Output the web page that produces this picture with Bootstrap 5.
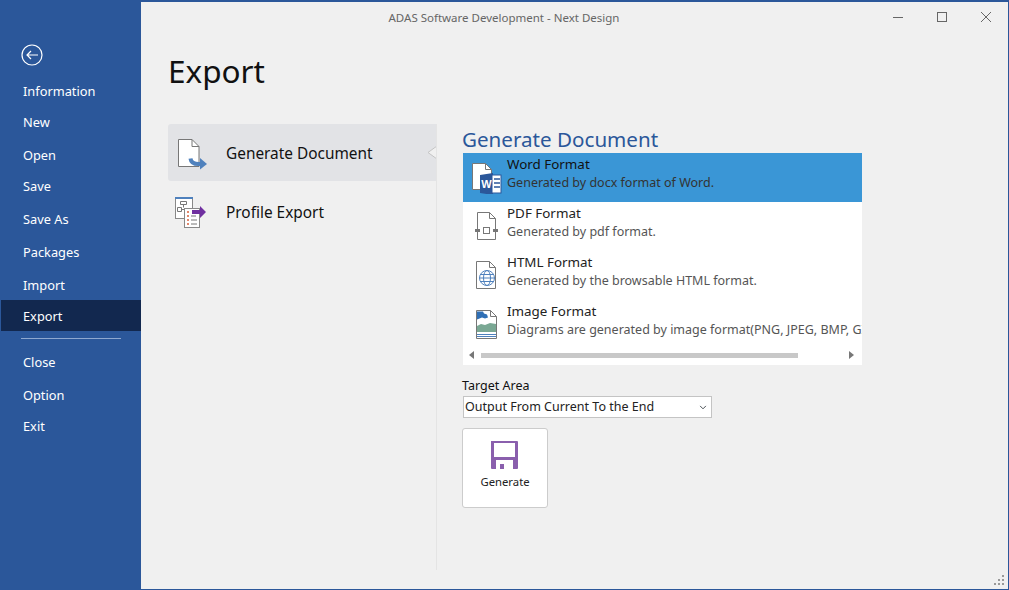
<!DOCTYPE html>
<html lang="en">
<head>
<meta charset="utf-8">
<title>Next Design</title>
<link href="https://cdn.jsdelivr.net/npm/bootstrap@5.3.0/dist/css/bootstrap.min.css" rel="stylesheet">
<style>
html,body{height:100%;overflow:hidden}
body{background:#f0f0f0;font-family:"Noto Sans","Open Sans",sans-serif;color:#111}
.win{height:590px;border:1px solid #2b579a;border-top-width:2px;border-left-width:1px}
.side{width:140px;background:#2b579a;color:#fff;padding-top:42px;flex:none}
.back-ic{display:block;margin:0 0 10px 20px;height:22px}
.side-item{height:31px;line-height:31px;padding-left:22px;font-size:12.8px;color:#fff}
.side-item.push{margin-top:2px}
.side-item.on{background:#12284f;margin:-1px 0 1px;line-height:33px}
.side-rule{height:1px;background:#8ea8cf;margin:6px 20px 8px 20px}
.cap{height:32px}
.cap-title{font-size:11.5px;color:#666;line-height:32px;margin-right:9px}
.cap-btn{width:44px;height:30px}
.page-title{font-size:31.500px;line-height:44px;margin:15px 0 31px 27px;font-weight:400;color:#111}
.left-pane{width:269px;margin-left:27px;height:446px;border-right:1px solid #e4e4e4}
.cat{height:57px;font-size:15.400px;padding:2px 0 0 9px}
.cat.on{background:#e2e3e6;border-radius:3px 0 0 3px}
.cat-ic{width:49px;flex:none}
.ic-out{margin-left:-2px;display:block}
.cat-caret{position:absolute;right:0;top:22px}
.cat.second{margin-top:2px}
.right-pane{padding-left:25px;width:425px}
.sec-title{font-size:20.6px;line-height:30px;color:#2b579a;margin:0 0 -1px;font-weight:400}
.fmt-box{margin-left:1px;width:399px;height:212px;background:#fff;border:0;border-radius:0}
.fmt{height:49px;font-size:12.5px;line-height:18px;white-space:nowrap;border:0;background:transparent;color:#222}
.fmt.list-group-item{padding:2px 0 0 44px}
.fmt.sel{background:#3a96d6;color:#111}
.fmt-name{font-size:13.400px;display:block;margin-bottom:1px}
.fmt-sub{color:#555;display:block;overflow:hidden}
.fmt.sel .fmt-sub{color:#333}
.fmt-ic{position:absolute;left:9px;top:9px}
.scroller{height:16px;margin-top:-2px;padding:0 8px 0 6px;gap:7px}
.scroll-thumb{width:317px;height:5px;background:#c8c8c8}
.scroll-fill{flex:1}
.target-lbl{font-size:12.5px;line-height:18px;margin:12px 0 1px}
.target-sel{width:249px;height:22px;margin-left:1px;padding:0 0 0 1px;font-size:12.5px;line-height:20px;border:1px solid #c4c4c4;border-radius:0;background-size:8px 7px;background-position:right 4px center;color:#222;font-family:inherit}
.gen-btn{width:86px;height:80px;margin-top:10px;background:#fff;border:1px solid #ccc;border-radius:3px;padding:12px 0 0;font-size:11.3px;line-height:16px;color:#222}
.gen-btn svg{display:block;margin:0 0 5px -1px}
.grip{position:absolute;right:4px;bottom:4px}
</style>
</head>
<body>
<div class="win d-flex position-relative">
  <nav class="side d-flex flex-column">
    <svg class="back-ic" width="22" height="22" viewBox="0 0 22 22" fill="none" stroke="#fff"><circle cx="11" cy="11" r="10" stroke-width="1.2"/><path d="M17 11H6M10 7l-4 4 4 4" stroke-width="1.2"/></svg>
    <div class="side-item">Information</div>
    <div class="side-item">New</div>
    <div class="side-item push">Open</div>
    <div class="side-item">Save</div>
    <div class="side-item push">Save As</div>
    <div class="side-item push">Packages</div>
    <div class="side-item push">Import</div>
    <div class="side-item on">Export</div>
    <div class="side-rule"></div>
    <div class="side-item">Close</div>
    <div class="side-item push">Option</div>
    <div class="side-item">Exit</div>
  </nav>
  <main class="flex-grow-1 d-flex flex-column">
    <div class="cap d-flex">
      <div class="cap-title flex-grow-1 text-center">ADAS Software Development - Next Design</div>
      <div class="d-flex">
        <div class="cap-btn d-flex align-items-center justify-content-center"><svg width="12" height="12" viewBox="0 0 12 12"><path d="M1 6.500h10" stroke="#666"/></svg></div>
        <div class="cap-btn d-flex align-items-center justify-content-center"><svg width="12" height="12" viewBox="0 0 12 12" fill="none"><rect x="1.500" y="1.500" width="9" height="9" stroke="#666"/></svg></div>
        <div class="cap-btn d-flex align-items-center justify-content-center"><svg width="12" height="12" viewBox="0 0 12 12"><path d="M1 1l10 10M11 1L1 11" stroke="#666"/></svg></div>
      </div>
    </div>
    <h1 class="page-title">Export</h1>
    <div class="d-flex">
      <div class="left-pane">
        <div class="cat on d-flex align-items-center position-relative">
          <span class="cat-ic">
            <svg width="32" height="32" viewBox="0 0 32 32" fill="none"><path d="M1.500 1.500H15l7 7v20H1.500z" fill="#fff" stroke="#777"/><path d="M15 1.500v7h7" stroke="#777"/><path d="M13.500 20.500c.5 4.500 4 6 10 5.500" stroke="#4f81bd" stroke-width="4"/><path d="M23 20l7 6-7 5.500z" fill="#4f81bd"/></svg>
          </span>
          <span>Generate Document</span>
          <svg class="cat-caret" width="9" height="13" viewBox="0 0 9 13" fill="none"><path d="M9 .7L1 6.500l8 5.800" fill="#f0f0f0" stroke="#c4c4c4"/></svg>
        </div>
        <div class="cat second d-flex align-items-center">
          <span class="cat-ic">
            <svg class="ic-out" width="32" height="32" viewBox="0 0 32 32" fill="none"><rect x=".5" y=".5" width="17" height="21" fill="#fff" stroke="#888"/><path d="M0 1h18" stroke="#4f81bd" stroke-width="2"/><path d="M5.500 4.500h6v3h-6zM2.500 10.500h4v4h-4zM8.500 7.500v3M6.500 12.500h3" stroke="#777"/><rect x="9.500" y="11.500" width="15" height="19" fill="#fff" stroke="#888"/><path d="M12 15h2M12 19h2M12 23h2M12 27h2" stroke="#d9603b" stroke-width="1.500"/><path d="M16 19h5M16 23h6M16 27h6" stroke="#777"/><path d="M17 13h8v-4l6 6-6 6v-4h-8z" fill="#7030a0"/></svg>
          </span>
          <span>Profile Export</span>
        </div>
      </div>
      <div class="right-pane">
        <h2 class="sec-title">Generate Document</h2>
        <div class="fmt-box list-group overflow-hidden">
          <div class="fmt sel list-group-item position-relative">
            <svg class="fmt-ic" width="30" height="32" viewBox="0 0 30 32" fill="none"><path d="M.500 1.500h13l6 6v20H.500z" fill="#fff" stroke="#777"/><path d="M13.500 1.500v6h6" stroke="#777"/><path d="M8 13l13-2v22l-13-2z" fill="#2b579a"/><rect x="20" y="13" width="9" height="18" fill="#fff" stroke="#2b579a"/><path d="M22 17h6M22 21h6M22 25h6" stroke="#2b579a" stroke-width="1.500"/><text x="14.500" y="26" font-size="11" font-weight="700" fill="#fff" text-anchor="middle" font-family="Liberation Sans, sans-serif">W</text></svg>
            <span class="fmt-name">Word Format</span><span class="fmt-sub">Generated by docx format of Word.</span>
          </div>
          <div class="fmt list-group-item position-relative">
            <svg class="fmt-ic" width="30" height="30" viewBox="0 0 30 30" fill="none"><path d="M5.500 1.500h12l6 6v21h-18z" fill="#fff" stroke="#777"/><path d="M17.500 1.500v6h6" stroke="#777"/><path d="M3 19.500h5M21 19.500h5" stroke="#777" stroke-width="3"/><rect x="11.500" y="16.500" width="6" height="6" stroke="#777"/></svg>
            <span class="fmt-name">PDF Format</span><span class="fmt-sub">Generated by pdf format.</span>
          </div>
          <div class="fmt list-group-item position-relative">
            <svg class="fmt-ic" width="30" height="30" viewBox="0 0 30 30" fill="none"><path d="M4.500 1.500h13l6 6v21h-19z" fill="#fff" stroke="#777"/><path d="M17.500 1.500v6h6" stroke="#777"/><circle cx="15" cy="18" r="7.500" stroke="#4f81bd"/><ellipse cx="15" cy="18" rx="3.500" ry="7.500" stroke="#4f81bd"/><path d="M7.500 18h15M8.500 14.500h13M8.500 21.500h13" stroke="#4f81bd"/></svg>
            <span class="fmt-name">HTML Format</span><span class="fmt-sub">Generated by the browsable HTML format.</span>
          </div>
          <div class="fmt list-group-item position-relative">
            <svg class="fmt-ic" width="30" height="30" viewBox="0 0 30 30" fill="none"><path d="M4.500 1.500h14l6 6v22h-20z" fill="#fff" stroke="#777"/><path d="M18.500 1.500v6h6" stroke="#777"/><path d="M5 2.500h6l1 2 3 1 1 3-3 1-3-1-5 2z" fill="#2f6fb5"/><path d="M5 17l4-2 4 1 5-2 6 1v8H5z" fill="#7aa894"/><path d="M5 25.500h19M5 27.500h19" stroke="#4f81bd"/></svg>
            <span class="fmt-name">Image Format</span><span class="fmt-sub">Diagrams are generated by image format(PNG, JPEG, BMP, GIF).</span>
          </div>
          <div class="scroller d-flex align-items-center">
            <svg width="5" height="8" viewBox="0 0 5 8"><path d="M5 0v8L0 4z" fill="#777"/></svg>
            <div class="scroll-thumb"></div>
            <div class="scroll-fill"></div>
            <svg width="5" height="8" viewBox="0 0 5 8"><path d="M0 0v8l5-4z" fill="#777"/></svg>
          </div>
        </div>
        <div class="target-lbl">Target Area</div>
        <select class="form-select target-sel"><option>Output From Current To the End</option></select>
        <button type="button" class="btn gen-btn d-flex flex-column align-items-center justify-content-start">
          <svg width="27" height="28" viewBox="0 0 27 28"><path d="M0 0h26a1 1 0 0 1 1 1v26a1 1 0 0 1-1 1H1a1 1 0 0 1-1-1z" fill="#8a5fad"/><rect x="3" y="2" width="21" height="14" fill="#fff"/><rect x="5" y="19" width="17" height="9" fill="#fff"/><rect x="9" y="23" width="4" height="5" fill="#8a5fad"/></svg>
          Generate
        </button>
      </div>
    </div>
  </main>
  <svg class="grip" width="10" height="10" viewBox="0 0 10 10"><path d="M8 0h2v2H8zM4 4h2v2H4zM8 4h2v2H8zM0 8h2v2H0zM4 8h2v2H4zM8 8h2v2H8z" fill="#999"/></svg>
</div>
<script src="https://cdn.jsdelivr.net/npm/bootstrap@5.3.0/dist/js/bootstrap.bundle.min.js"></script>
</body>
</html>
